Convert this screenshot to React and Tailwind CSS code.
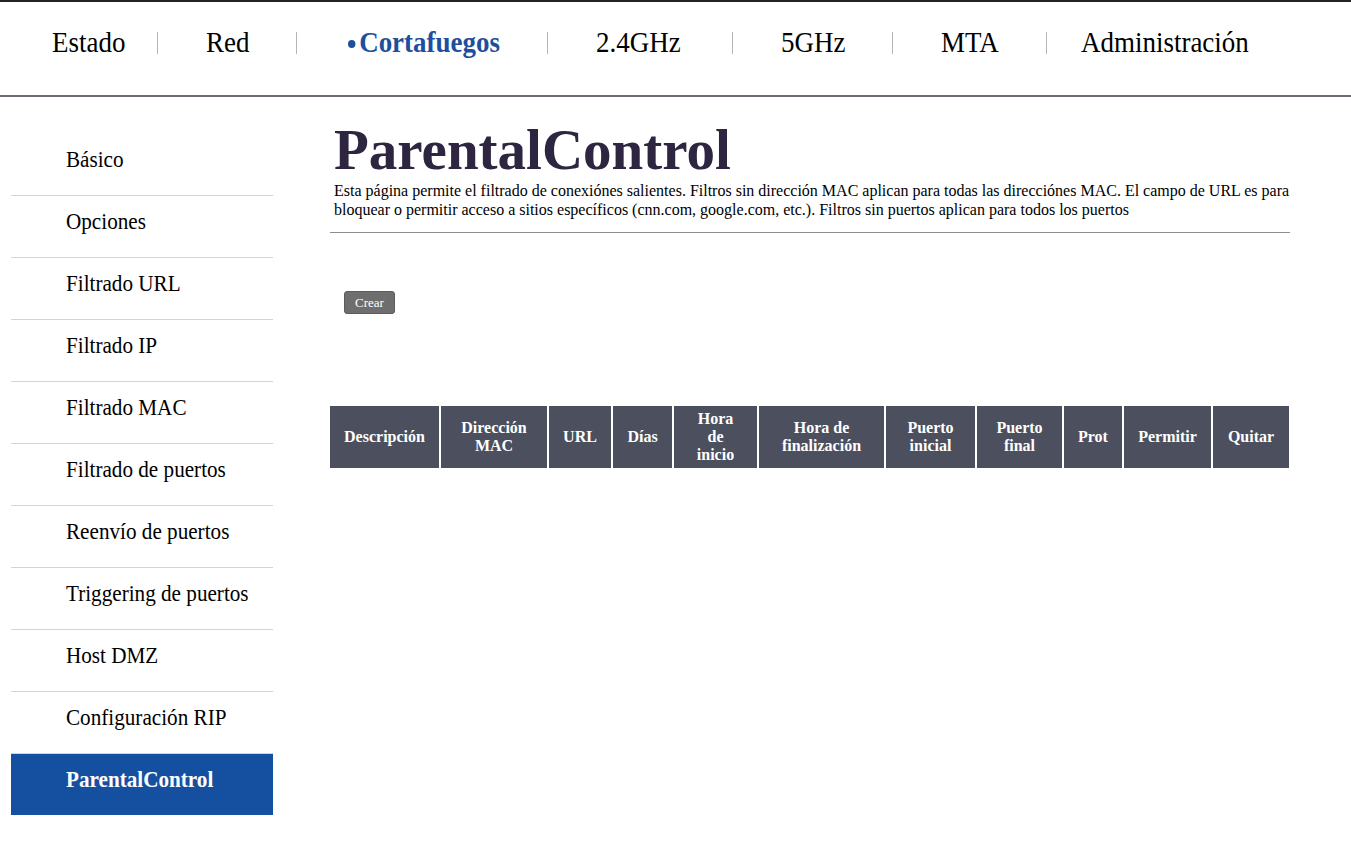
import React from 'react';

const sideItems = [
    'Básico',
    'Opciones',
    'Filtrado URL',
    'Filtrado IP',
    'Filtrado MAC',
    'Filtrado de puertos',
    'Reenvío de puertos',
    'Triggering de puertos',
    'Host DMZ',
    'Configuración RIP',
    'ParentalControl',
];

const columns = [
    { label: ['Descripción'], w: 'w-[110px]' },
    { label: ['Dirección', 'MAC'], w: 'w-[108px]' },
    { label: ['URL'], w: 'w-[64px]' },
    { label: ['Días'], w: 'w-[61px]' },
    { label: ['Hora', 'de', 'inicio'], w: 'w-[85px]' },
    { label: ['Hora de', 'finalización'], w: 'w-[127px]' },
    { label: ['Puerto', 'inicial'], w: 'w-[91px]' },
    { label: ['Puerto', 'final'], w: 'w-[87px]' },
    { label: ['Prot'], w: 'w-[60px]' },
    { label: ['Permitir'], w: 'w-[89px]' },
    { label: ['Quitar'], w: 'w-[77px]' },
];

// text is drawn a bit taller than wide in the nav, so squeeze it
function NavText({ w, children, className = '' }) {
    return (
        <span className={'inline-block whitespace-nowrap ' + w}>
            <span className={'inline-block origin-left scale-x-[0.93] ' + className}>{children}</span>
        </span>
    );
}

function Sep({ className }) {
    return <span className={'inline-block w-px h-[22px] bg-[#b5b5b5] ' + className} />;
}

function TopNav() {
    return (
        <header className="border-t-2 border-b-2 border-t-[#222226] border-b-[#6c6c74] h-[97px]">
            <nav className="flex items-center pt-[26px] pl-[52px] text-[29px] leading-[29px] text-black">
                <NavText w="w-[72px]">Estado</NavText>
                <Sep className="ml-[33px] mr-[48px]" />
                <NavText w="w-[42px]">Red</NavText>
                <Sep className="ml-[48px] mr-[51px]" />
                <NavText w="w-[151px]" className="text-[#1d4f9c] font-bold">
                    <span className="inline-block w-[8px] h-[8px] rounded-full bg-[#1d4f9c] align-[4px] mr-[4px]" />
                    Cortafuegos
                </NavText>
                <Sep className="ml-[48px] mr-[48px]" />
                <NavText w="w-[83px]">2.4GHz</NavText>
                <Sep className="ml-[53px] mr-[48px]" />
                <NavText w="w-[63px]">5GHz</NavText>
                <Sep className="ml-[48px] mr-[48px]" />
                <NavText w="w-[56px]">MTA</NavText>
                <Sep className="ml-[49px] mr-[34px]" />
                <NavText w="w-[165px]">Administración</NavText>
            </nav>
        </header>
    );
}

function Sidebar() {
    return (
        <aside className="w-[262px] ml-[11px] mt-[36px] shrink-0">
            {sideItems.map((item, i) => {
                const active = item === 'ParentalControl';
                return (
                    <div
                        key={item}
                        className={
                            'h-[62px] pl-[55px] text-[23px] leading-[24px] whitespace-nowrap ' +
                            (i > 0 ? 'border-t border-[#d4d4d4] pt-[14px] ' : 'pt-[15px] ') +
                            (active ? 'bg-[#1550a0] text-white font-bold' : 'text-black')
                        }
                    >
                        <span className="inline-block origin-left scale-x-[0.92]">{item}</span>
                    </div>
                );
            })}
        </aside>
    );
}

export default function App() {
    return (
        <div className="min-h-screen bg-white font-['Liberation_Serif',serif]">
            <TopNav />
            <div className="flex">
                <Sidebar />
                <main className="ml-[57px] w-[960px] pt-[22px]">
                    <h1 className="pl-[4px] text-[57px] font-bold leading-[62px] text-[#2e2541]">ParentalControl</h1>
                    <p className="pl-[4px] text-[16px] leading-[19px] text-black">
                        Esta página permite el filtrado de conexiónes salientes. Filtros sin dirección MAC aplican para todas las direcciónes MAC. El campo de URL es para bloquear o permitir acceso a sitios específicos (cnn.com, google.com, etc.). Filtros sin puertos aplican para todos los puertos
                    </p>
                    <hr className="mt-[13px] border-0 h-px bg-[#8d8d8d]" />
                    <div className="pt-[57px] pl-[14px]">
                        <button className="h-[23px] px-[10px] bg-[#6e6e6e] border border-[#5c5c5c] rounded-[3px] text-[13px] text-white leading-none">
                            Crear
                        </button>
                    </div>
                    <table className="mt-[92px] border-collapse text-white">
                        <thead>
                            <tr>
                                {columns.map((c, i) => (
                                    <th
                                        key={i}
                                        className={
                                            c.w +
                                            ' h-[62px] bg-[#4b4f5e] text-[16px] leading-[18px] font-bold text-center align-middle p-0 ' +
                                            (i < columns.length - 1 ? 'border-r-2 border-white' : '')
                                        }
                                    >
                                        {c.label.map((l, j) => (
                                            <div key={j}>{l}</div>
                                        ))}
                                    </th>
                                ))}
                            </tr>
                        </thead>
                    </table>
                </main>
            </div>
        </div>
    );
}
